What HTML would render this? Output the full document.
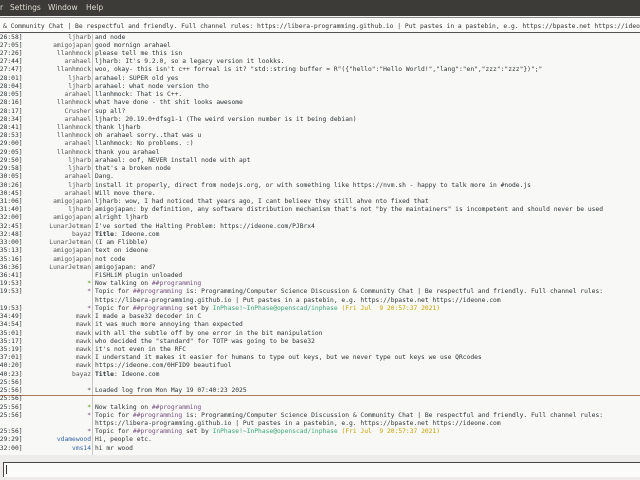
<!DOCTYPE html>
<html><head><meta charset="utf-8"><style>
*{margin:0;padding:0;box-sizing:border-box}
html,body{width:640px;height:480px;overflow:hidden;background:#f6f5f4}
#menu{position:absolute;left:0;top:0;width:640px;height:16px;background:#3c3b37;color:#dfdbd2;font:7.5px "DejaVu Sans","Liberation Sans",sans-serif;white-space:pre}
#menu span{position:absolute;top:3px}
#topic{position:absolute;left:0;top:17px;width:640px;height:16px;background:#fbfbfa;border-top:1px solid #8a8884;border-bottom:1px solid #555;font:6.3px "DejaVu Sans Mono","Liberation Mono",monospace;color:#333;white-space:pre;padding:5px 0 0 3px;overflow:hidden}
#chat{position:absolute;left:0;top:34px;width:640px;height:421px;background:#f8f8f7;overflow:hidden}
.l{position:absolute;left:0;height:8.22px;width:640px;font:6.3px/8.22px "DejaVu Sans Mono","Liberation Mono",monospace;color:#2e3436;white-space:pre}
.t{position:absolute;left:-4px}
.n{position:absolute;right:549px;text-align:right;color:#555}
.m{position:absolute;left:95px}
#vsep{position:absolute;left:92px;top:0;width:1px;height:421px;background:#c8c6c2}
#marker{position:absolute;left:0;top:361px;width:640px;height:1px;background:#b07a62}
.p{color:#75507b}.g{color:#3aa776}.y{color:#c4a000}.b{color:#3465a4}.gr{color:#4e9a06}
#bot{position:absolute;left:0;top:455px;width:640px;height:25px;background:#edecea}
#inp{position:absolute;left:3px;top:462px;width:637px;height:15px;background:#fbfbfa;border-top:1px solid #444;border-left:1px solid #444}
#cur{position:absolute;left:6px;top:465px;width:1px;height:9px;background:#333}
</style></head><body>
<div id="menu"><span style="left:0">r</span><span style="left:10px">Settings</span><span style="left:48px">Window</span><span style="left:86px">Help</span></div>
<div id="topic">&amp; Community Chat | Be respectful and friendly. Full channel rules: https://libera-programming.github.io | Put pastes in a pastebin, e.g. https://bpaste.net https://ideone.com</div>
<div id="chat">
<div id="vsep"></div>
<div id="marker"></div>
<div class="l" style="top:-0.4px"><span class="t">[26:58]</span><span class="n">ljharb</span><span class="m">and node</span></div>
<div class="l" style="top:7.82px"><span class="t">[27:05]</span><span class="n">amigojapan</span><span class="m">good mornign arahael</span></div>
<div class="l" style="top:16.04px"><span class="t">[27:26]</span><span class="n">llanhmock</span><span class="m">please tell me this isn</span></div>
<div class="l" style="top:24.26px"><span class="t">[27:44]</span><span class="n">arahael</span><span class="m">ljharb: It's 9.2.0, so a legacy version it lookks.</span></div>
<div class="l" style="top:32.48px"><span class="t">[27:47]</span><span class="n">llanhmock</span><span class="m">woo, okay- this isn't c++ forreal is it? "std::string buffer = R"({"hello":"Hello World!","lang":"en","zzz":"zzz"})";"</span></div>
<div class="l" style="top:40.7px"><span class="t">[28:01]</span><span class="n">ljharb</span><span class="m">arahael: SUPER old yes</span></div>
<div class="l" style="top:48.92px"><span class="t">[28:04]</span><span class="n">ljharb</span><span class="m">arahael: what node version tho</span></div>
<div class="l" style="top:57.14px"><span class="t">[28:05]</span><span class="n">arahael</span><span class="m">llanhmock: That is C++.</span></div>
<div class="l" style="top:65.36px"><span class="t">[28:16]</span><span class="n">llanhmock</span><span class="m">what have done - tht shit looks awesome</span></div>
<div class="l" style="top:73.58px"><span class="t">[28:17]</span><span class="n">Crusher</span><span class="m">sup all?</span></div>
<div class="l" style="top:81.8px"><span class="t">[28:34]</span><span class="n">arahael</span><span class="m">ljharb: 20.19.0+dfsg1-1 (The weird version number is it being debian)</span></div>
<div class="l" style="top:90.02px"><span class="t">[28:41]</span><span class="n">llanhmock</span><span class="m">thank ljharb</span></div>
<div class="l" style="top:98.24px"><span class="t">[28:53]</span><span class="n">llanhmock</span><span class="m">oh arahael sorry..that was u</span></div>
<div class="l" style="top:106.46px"><span class="t">[29:00]</span><span class="n">arahael</span><span class="m">llanhmock: No problems. :)</span></div>
<div class="l" style="top:114.68px"><span class="t">[29:05]</span><span class="n">llanhmock</span><span class="m">thank you arahael</span></div>
<div class="l" style="top:122.9px"><span class="t">[29:50]</span><span class="n">ljharb</span><span class="m">arahael: oof, NEVER install node with apt</span></div>
<div class="l" style="top:131.12px"><span class="t">[29:58]</span><span class="n">ljharb</span><span class="m">that's a broken node</span></div>
<div class="l" style="top:139.34px"><span class="t">[30:05]</span><span class="n">arahael</span><span class="m">Dang.</span></div>
<div class="l" style="top:147.56px"><span class="t">[30:26]</span><span class="n">ljharb</span><span class="m">install it properly, direct from nodejs.org, or with something like https://nvm.sh - happy to talk more in #node.js</span></div>
<div class="l" style="top:155.78px"><span class="t">[30:45]</span><span class="n">arahael</span><span class="m">Will move there.</span></div>
<div class="l" style="top:164px"><span class="t">[31:06]</span><span class="n">amigojapan</span><span class="m">ljharb: wow, I had noticed that years ago, I cant belieev they still ahve nto fixed that</span></div>
<div class="l" style="top:172.22px"><span class="t">[31:40]</span><span class="n">ljharb</span><span class="m">amigojapan: by definition, any software distribution mechanism that's not "by the maintainers" is incompetent and should never be used</span></div>
<div class="l" style="top:180.44px"><span class="t">[32:00]</span><span class="n">amigojapan</span><span class="m">alright ljharb</span></div>
<div class="l" style="top:188.66px"><span class="t">[32:45]</span><span class="n">LunarJetman</span><span class="m">I've sorted the Halting Problem: https://ideone.com/PJBrx4</span></div>
<div class="l" style="top:196.88px"><span class="t">[32:48]</span><span class="n">bayaz</span><span class="m"><b>Title</b>: Ideone.com</span></div>
<div class="l" style="top:205.1px"><span class="t">[33:00]</span><span class="n">LunarJetman</span><span class="m">(I am Flibble)</span></div>
<div class="l" style="top:213.32px"><span class="t">[35:13]</span><span class="n">amigojapan</span><span class="m">text on ideone</span></div>
<div class="l" style="top:221.54px"><span class="t">[35:16]</span><span class="n">amigojapan</span><span class="m">not code</span></div>
<div class="l" style="top:229.76px"><span class="t">[36:36]</span><span class="n">LunarJetman</span><span class="m">amigojapan: and?</span></div>
<div class="l" style="top:237.98px"><span class="t">[36:41]</span><span class="m">FiSHLiM plugin unloaded</span></div>
<div class="l" style="top:246.2px"><span class="t">[19:53]</span><span class="n gr">*</span><span class="m">Now talking on <span class="p">##programming</span></span></div>
<div class="l" style="top:254.42px"><span class="t">[19:53]</span><span class="n p">*</span><span class="m">Topic for <span class="p">##programming</span> is: Programming/Computer Science Discussion &amp; Community Chat | Be respectful and friendly. Full channel rules:</span></div>
<div class="l" style="top:262.64px"><span class="m">https://libera-programming.github.io | Put pastes in a pastebin, e.g. https://bpaste.net https://ideone.com</span></div>
<div class="l" style="top:270.86px"><span class="t">[19:53]</span><span class="n p">*</span><span class="m">Topic for <span class="p">##programming</span> set by <span class="g">InPhase!~InPhase@openscad/inphase</span> <span class="y">(Fri Jul  9 20:57:37 2021)</span></span></div>
<div class="l" style="top:279.08px"><span class="t">[34:49]</span><span class="n">mawk</span><span class="m">I made a base32 decoder in C</span></div>
<div class="l" style="top:287.3px"><span class="t">[34:54]</span><span class="n">mawk</span><span class="m">it was much more annoying than expected</span></div>
<div class="l" style="top:295.52px"><span class="t">[35:01]</span><span class="n">mawk</span><span class="m">with all the subtle off by one error in the bit manipulation</span></div>
<div class="l" style="top:303.74px"><span class="t">[35:17]</span><span class="n">mawk</span><span class="m">who decided the "standard" for TOTP was going to be base32</span></div>
<div class="l" style="top:311.96px"><span class="t">[35:19]</span><span class="n">mawk</span><span class="m">it's not even in the RFC</span></div>
<div class="l" style="top:320.18px"><span class="t">[37:01]</span><span class="n">mawk</span><span class="m">I understand it makes it easier for humans to type out keys, but we never type out keys we use QRcodes</span></div>
<div class="l" style="top:328.4px"><span class="t">[40:20]</span><span class="n">mawk</span><span class="m">https://ideone.com/0HFID9 beautifuol</span></div>
<div class="l" style="top:336.62px"><span class="t">[40:23]</span><span class="n">bayaz</span><span class="m"><b>Title</b>: Ideone.com</span></div>
<div class="l" style="top:344.84px"><span class="t">[25:56]</span></div>
<div class="l" style="top:353.06px"><span class="t">[25:56]</span><span class="n">*</span><span class="m">Loaded log from Mon May 19 07:40:23 2025</span></div>
<div class="l" style="top:361.28px"><span class="t">[25:56]</span></div>
<div class="l" style="top:369.5px"><span class="t">[25:56]</span><span class="n gr">*</span><span class="m">Now talking on <span class="p">##programming</span></span></div>
<div class="l" style="top:377.72px"><span class="t">[25:56]</span><span class="n p">*</span><span class="m">Topic for <span class="p">##programming</span> is: Programming/Computer Science Discussion &amp; Community Chat | Be respectful and friendly. Full channel rules:</span></div>
<div class="l" style="top:385.94px"><span class="m">https://libera-programming.github.io | Put pastes in a pastebin, e.g. https://bpaste.net https://ideone.com</span></div>
<div class="l" style="top:394.16px"><span class="t">[25:56]</span><span class="n p">*</span><span class="m">Topic for <span class="p">##programming</span> set by <span class="g">InPhase!~InPhase@openscad/inphase</span> <span class="y">(Fri Jul  9 20:57:37 2021)</span></span></div>
<div class="l" style="top:402.38px"><span class="t">[29:29]</span><span class="n b">vdamewood</span><span class="m">Hi, people etc.</span></div>
<div class="l" style="top:410.6px"><span class="t">[32:00]</span><span class="n b">vms14</span><span class="m">hi mr wood</span></div>
</div>
<div id="bot"></div>
<div id="inp"></div>
<div id="cur"></div>
</body></html>
